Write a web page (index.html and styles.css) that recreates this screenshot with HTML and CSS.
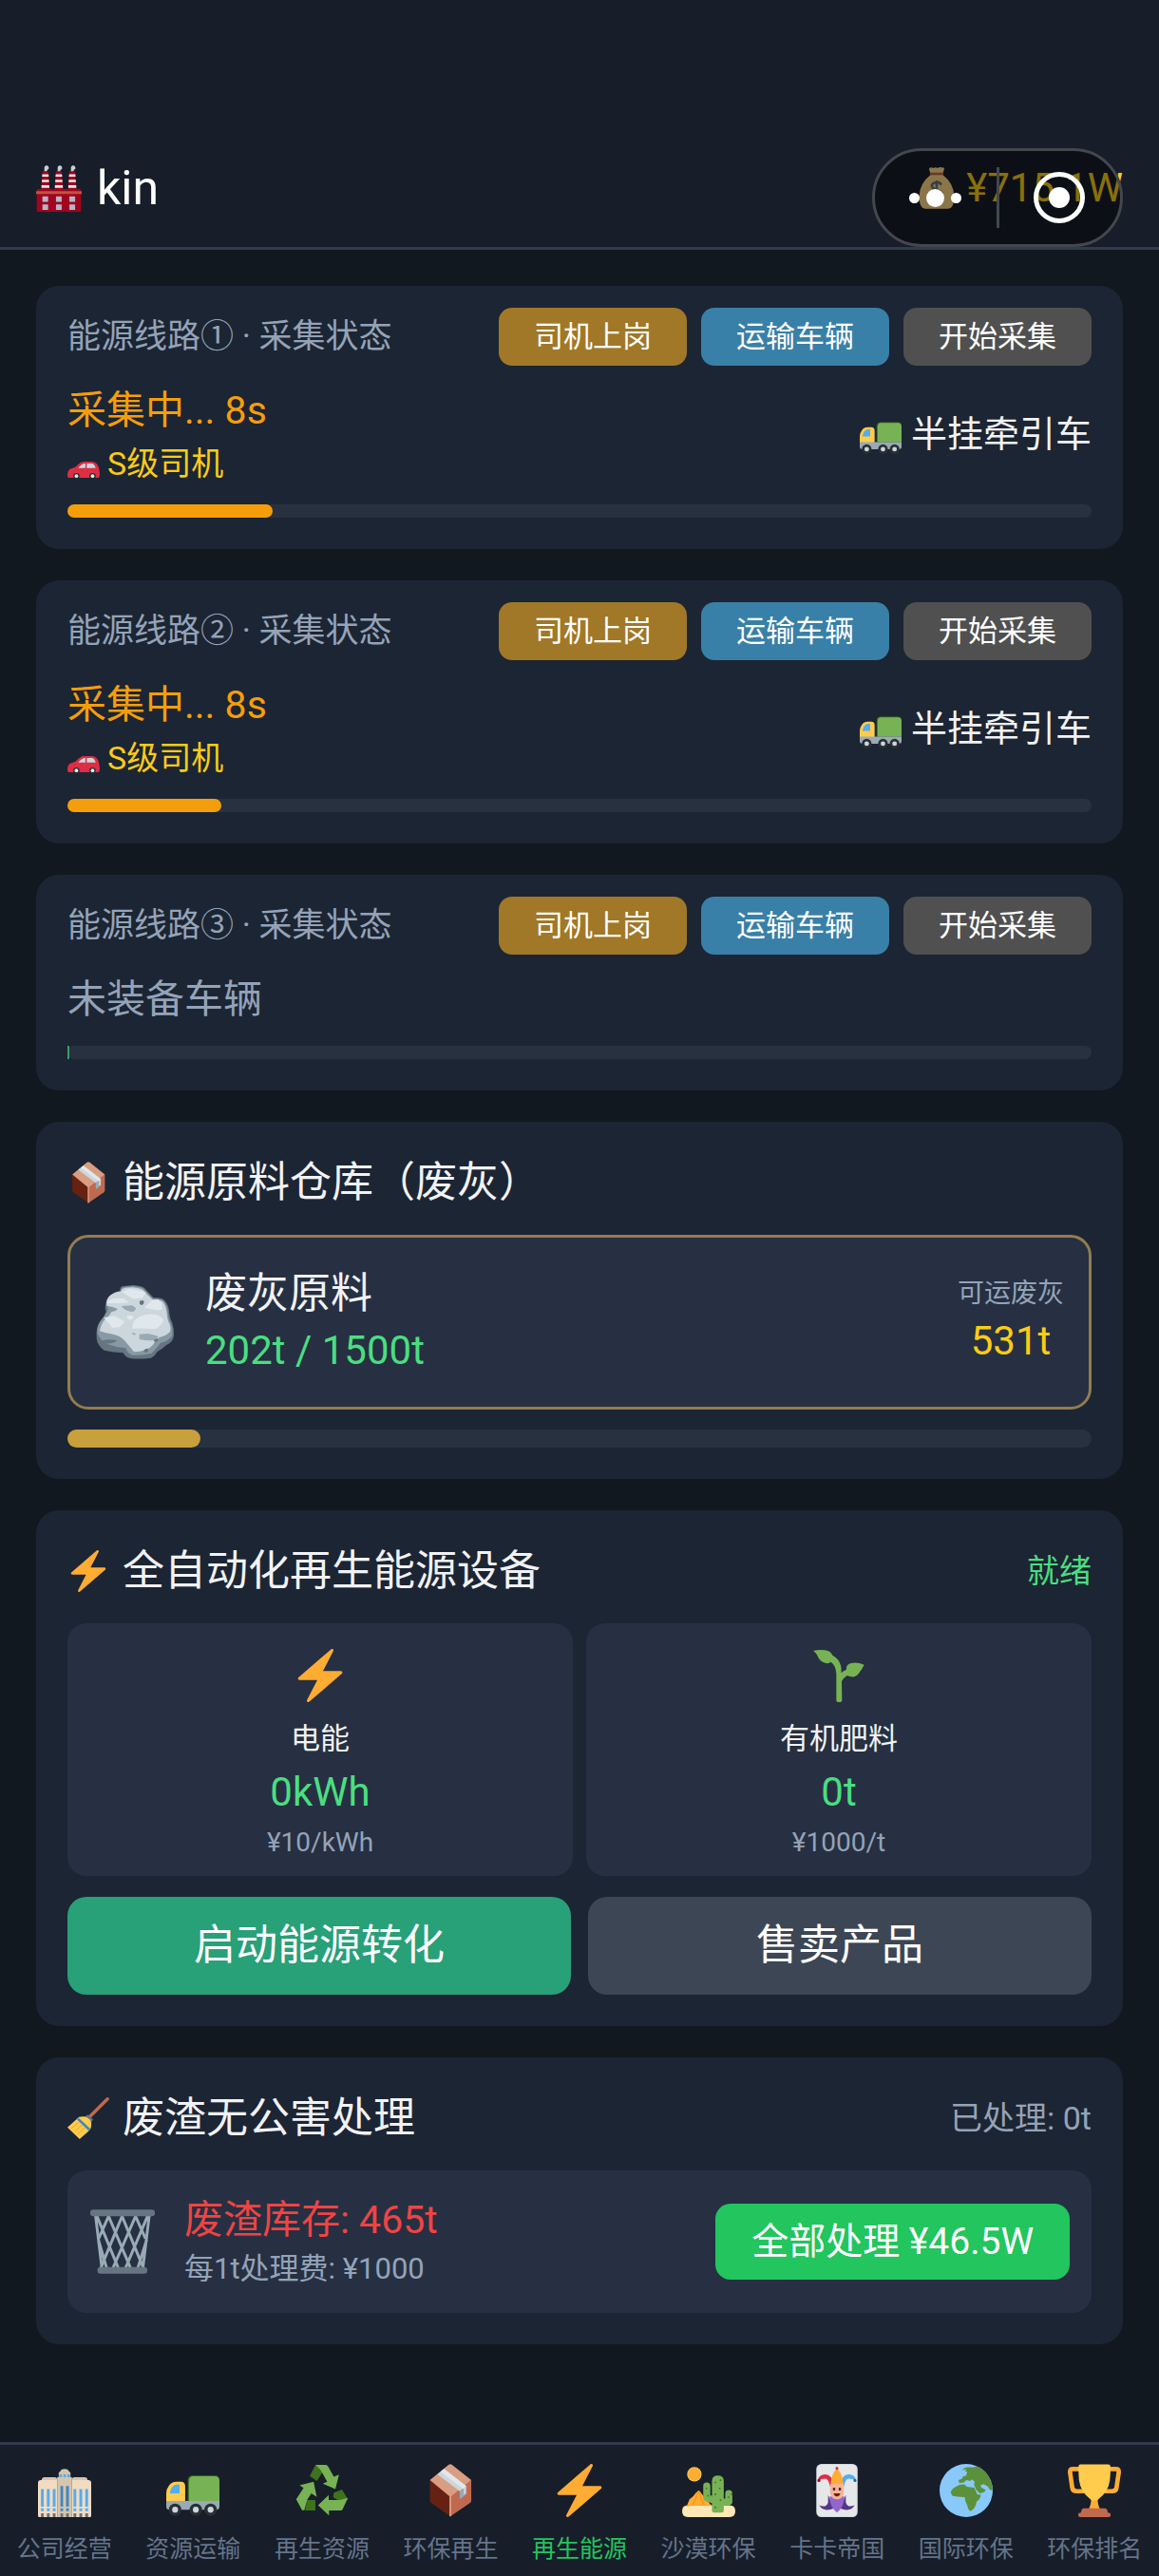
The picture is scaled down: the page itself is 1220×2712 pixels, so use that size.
FILE: index.html
```
<!DOCTYPE html>
<html lang="zh-CN">
<head>
    <meta charset="UTF-8">
    <meta name="viewport" content="width=device-width, initial-scale=1.0">
    <title>再生能源</title>
    <link rel="stylesheet" href="styles.css">
</head>
<body>

    <!-- Shared icons -->
    <svg class="icon-defs" aria-hidden="true">
        <symbol id="icon-factory" viewBox="0 -1.5 36 37.5">
            <path fill="#C8CFD4" d="M6.5 4.500V1.500a1.800 1.800 0 1 1 2.500 1.400L8 4.500zM17 4.500V1.500a1.800 1.800 0 1 1 2.500 1.400L18.500 4.500zM27.500 4.500V1.500a1.800 1.800 0 1 1 2.500 1.400L29 4.500z"/>
            <path fill="#A0041E" d="M5 4h4.500l1.200 14.500H4zM15.600 4h4.500l1.200 14.500h-6.700zM26.200 4h4.500l1.200 14.500h-6.700z"/>
            <path fill="#F3E6EA" d="M4.900 6.300h4.900l.2 2H4.700zM4.600 10.600h5.500l.2 2H4.500zM4.300 15h6.100l.2 2H4.200zM15.500 6.300h4.900l.2 2h-5.300zM15.200 10.600h5.500l.2 2h-5.800zM14.900 15H21l.2 2h-6.400zM26.100 6.300H31l.2 2h-5.300zM25.800 10.600h5.500l.2 2h-5.800zM25.500 15h6.100l.2 2h-6.400z"/>
            <path fill="#A0041E" d="M1.500 18h33a1 1 0 0 1 1 1v16a1 1 0 0 1-1 1h-33a1 1 0 0 1-1-1V19a1 1 0 0 1 1-1z"/>
            <path fill="#C1523F" d="M0 19.700h36V22H0z"/>
            <path fill="#B5B5C8" d="M5 23.800h4.500v4.300H5zM15.700 23.800h4.500v4.300h-4.500zM26.300 23.800h4.500v4.300h-4.500zM5 30.200h4.500v4.300H5zM15.700 30.200h4.500v4.300h-4.500zM26.300 30.200h4.500v4.300h-4.500z"/>
        </symbol>
        <symbol id="icon-money" viewBox="252 104 132 132">
            <path fill="#FDD888" d="M298 107q6-5 12 0 7-4 14 0 6-4 12-2 10 0 9 3l-5 20q36 28 36 68 0 39-20 39h-70q-20 0-20-39 0-40 36-68l-5-17z"/>
            <path fill="#BF6952" d="M300 121h42v8h-42z"/>
            <path fill="none" stroke="#67757F" stroke-width="8" d="M336 160q-6-10-17-8-15 3-13 13 2 7 16 11 16 4 16 14 0 9-15 10-14 0-20-11M321 146v62"/>
        </symbol>
        <symbol id="icon-car" viewBox="0 0 36 36">
            <path fill="#DD2E44" d="M9 22q5-6 10-6h8q6 0 8 7 1 4 1 8l-1 3H2q-2 0-2-3 0-5 3-7z"/>
            <path fill="#CCD6DD" d="M12 23q4-5 8-5v5zM21.500 18H27q3 0 4.500 5h-10z"/>
            <circle cx="10" cy="32" r="3.500" fill="#292F33"/><circle cx="28" cy="32" r="3.500" fill="#292F33"/>
            <circle cx="10" cy="32" r="2" fill="#E1E8ED"/><circle cx="28" cy="32" r="2" fill="#E1E8ED"/>
        </symbol>
        <symbol id="icon-truck" viewBox="0 0 36 36">
            <path fill="#3E721D" d="M18 7.800h15q3 0 3 3V25H14.600V11q0-3.200 3.400-3.200z"/>
            <path fill="#77B255" d="M18.500 8.300h14q3.500 0 3.500 3.500V25H15.400V12q0-3.700 3.100-3.700z"/>
            <path fill="#FFCC4D" d="M7 12h3q2.800 0 2.800 3v11H0v-6q0-3 2-5.500 1.500-2.500 5-2.500z"/>
            <path fill="#55ACEE" d="M6.500 14H9v6H2.500q.5-5 4-6z"/>
            <path fill="#99AAB5" d="M0 25h36v4q0 2-2 2H2q-2 0-2-2z"/>
            <circle cx="6" cy="31" r="4.200" fill="#292F33"/><circle cx="20" cy="31" r="4.200" fill="#292F33"/><circle cx="30" cy="31" r="4.200" fill="#292F33"/>
            <circle cx="6" cy="31" r="2" fill="#CCD6DD"/><circle cx="20" cy="31" r="2" fill="#CCD6DD"/><circle cx="30" cy="31" r="2" fill="#CCD6DD"/>
        </symbol>
        <symbol id="icon-package" viewBox="0 0 36 36">
            <path fill="#662113" d="M4.200 11 18 21.500v14L5 26.300q-.8-.6-.8-1.600z"/>
            <path fill="#C1694F" d="M32.200 11 18 21.500v14l13.400-9.200q.8-.6.800-1.600z"/>
            <path fill="#D99E82" d="m4.200 11 12.600-10.300q1.200-1 2.400 0L32.200 11 18.600 21.800v13.500q-.6.500-1.200 0V21.800z"/>
            <path fill="#99AAB5" d="m24.400 18.500 4.300-3.500v5.500l-4.300 3.500z"/>
            <path fill="#CCD6DD" d="m9.300 7 4.500-3.600L28.700 15v5l-1.600.8V16l-2.700 2.500z"/>
            <path fill="#E1E8ED" d="m11.500 5.300 2.300-1.900L28.700 15l-2 1.800z"/>
        </symbol>
        <symbol id="icon-bolt" viewBox="0 0 36 36">
            <path fill="#FFAC33" d="M32.938 15.651C32.792 15.260 32.418 15 32 15H19.925L26.890 1.458c.219-.426.106-.947-.271-1.243C26.437.071 26.218 0 26 0c-.233 0-.466.082-.653.243L18 6.588 3.347 19.243c-.316.273-.430.714-.284 1.105S3.582 21 4 21h12.075L9.110 34.542c-.219.426-.106.947.271 1.243.182.144.401.215.619.215.233 0 .466-.082.653-.243L18 29.412l14.653-12.655c.317-.273.430-.714.285-1.106z"/>
        </symbol>
        <symbol id="icon-rock" viewBox="122 98 258 252">
            <path fill="#66757F" d="M201 120q2-10 12-10l30-3q24 2 34 8 14 15 30 32 26-2 34 8 14 14 16 40 2 20 8 28 8 22 6 44-4 22-22 28-16 14-30 22-6 12-20 20-34 4-62 2-18-2-26-18-30-2-60-8-22-16-24-38-2-34 8-48 14-16 22-36-8-22 6-40 14-14 38-16z"/>
            <path fill="#8899A6" d="M203 121q4-8 14-9l24-2q24 2 34 8 14 15 30 32 24-2 34 8 12 14 14 40 2 20 8 28 8 22 4 42-14 18-34 20-16 20-30 34-30 8-62 6-16-6-20-22-30-2-60-14-24-14-30-34 0-24 10-38 16-16 24-36-8-22 6-38 14-14 38-15z"/>
            <path fill="#CCD6DD" d="M205 122q6-6 14-7l22-1q22 2 32 8 14 16 30 30 24 0 34 8 10 14 12 38 2 22 8 30 6 14 2 26-12 14-34 18-14 10-20 24-20 22-60 22-16-20-30-36-14-16-36-20-22-2-42-10 4-22 14-34 16-12 24-28 12 2 18-8-16-8-34-10-4-20 10-32 14-12 36-14z"/>
            <path fill="#E1E8ED" d="m207 128 24-10 40 8 12 4-12 18-30 2zM162 158q12-10 30-10l22 2 14 12-28 2-40 0zM278 178l22-22 22-4 10 12 2 20-18 2zM150 210l30-6q24 10 36 18l-16 18-22 2zM240 240q2-28 30-36 20-8 46-4 20 8 22 20-10 20-28 26-36-4-70-2zM222 206q6-6 18-2 8 6-4 12-10 2-14-10z"/>
            <path fill="#99AAB5" d="m205 173 34-2q14 8 12 12l-8 8q-24 0-38-18zM262 262l28-2 32 8-6 12q-24 4-54-2zM238 258q10 0 14 4-10 6-14-4z"/>
            <path fill="#66757F" d="M263 158q8-6 14 0 0 10-8 12-8-2-6-12zM308 280q8-6 15-2-4 10-13 8zM276 314q6-8 14-6 2 8-6 12-8 0-8-6zM146 282q22-6 46 0-18 14-42 8z"/>
        </symbol>
        <symbol id="icon-sprout" viewBox="108 45 168 168">
            <path fill="#77B255" d="M111 51q26-7 49 1 10 6 13 14 20 10 26 35 1 12 1 20 6-8 16-11-2-16 15-20 19-4 41 5-6 12-16 26-10 16-28 11-7-1-10-3-12 8-17 18l1 59q0 7-9 7t-9-6V124q-1-26-17-38-8 7-18 3-18-4-25-24-4-8-13-14z"/>
        </symbol>
        <symbol id="icon-broom" viewBox="0 0 36 36">
            <path stroke="#C1694F" stroke-width="2.800" stroke-linecap="round" d="M34.500 1.500 20 16"/>
            <path fill="#66757F" d="m18 15 4 4q-.5 2.500-4 2.500-3.500-3-3-5z"/>
            <path fill="#FFCC4D" d="M10 17q7-2 10.500 4 .5 5-1.500 7.500L10.500 36 0 26z"/>
            <path stroke="#FFAC33" stroke-width=".9" d="m3 27 7-6M6 29.500l7-6M8.500 32l7-6"/>
            <path stroke="#3B88C3" stroke-width="2.200" d="m9 18.500 10 9.500"/>
        </symbol>
        <symbol id="icon-basket" viewBox="100 410 212 212">
            <path fill="none" stroke="#99AAB5" stroke-width="9" d="m120 434 20 165M291 434l-20 165M124 434l68 165M161 434l70 165M204 434l68 165M247 434l32 72M286 434l-70 165M248 434l-72 165M205 434l-68 165M162 434l-32 72M129 510l26 89M283 510l-28 89"/>
            <rect x="103" y="414" width="206" height="21" rx="10" fill="#66757F"/>
            <rect x="126" y="597" width="159" height="21" rx="10" fill="#66757F"/>
        </symbol>
        <symbol id="icon-company" viewBox="0 0 36 36">
            <path fill="#F1DCC3" d="M0 13q0-2 2-2h11v25H1q-1 0-1-1zM36 13q0-2-2-2H23v25h12q1 0 1-1z"/>
            <path fill="#D6C4AC" d="M2.500 11q0-2 2-2h7q1.500 0 1.500 2zM33.500 11q0-2-2-2h-7q-1.500 0-1.500 2zM13 9h1V6l1.500-1.500q0-1.200 2.500-1.200t2.500 1.200L22 6v3h1v27H13z"/>
            <path fill="#55ACEE" d="M14.500 7h1.700v2h-1.700zM17.200 7h1.700v2h-1.700zM19.900 7h1.700v2h-1.700zM2 17h1.900v12H2zM6 17h1.900v12H6zM10 17h1.900v12H10zM24 17h1.900v12H24zM28 17h1.900v12H28zM32 17h1.900v12H32zM2 30h1.900v2H2zM6 30h1.900v2H6zM10 30h1.900v2H10zM24 30h1.900v2H24zM28 30h1.900v2H28zM32 30h1.900v2H32z"/>
            <path fill="#3B88C3" d="M15.200 15H17v14h-1.800zM19 15h1.900v14H19zM15.200 30H17v2h-1.800zM19 30h1.900v2H19z"/>
            <path fill="#66757F" d="M2 33.500h1.900V36H2zM6 33.500h1.900V36H6zM10 33.500h1.900V36H10zM15.200 33.500H17V36h-1.800zM19 33.500h1.900V36H19zM24 33.500h1.900V36H24zM28 33.500h1.900V36H28zM32 33.500h1.900V36H32z"/>
        </symbol>
        <symbol id="icon-recycle" viewBox="0 0 36 36">
            <path fill="#3E721D" d="m13.500.8-3.800 7.400 4.800 3.300 4.500-7zM8 24.500h5.500v7h-7zM31.500 17.300l4 6.700-4.500 2-5.500-3.500.5-3z"/>
            <path fill="#77B255" d="M13.500.6h7q1 0 1.500 1l4 7 3.500-1.300L27 17l-8.500-3.700L21.500 12 17 4zM12.300 12 2.800 14.500l2.700 1.700L.5 24l4 7.300H6l2-7L10.700 20l3.700 2.300zM15.300 28l7.200-7v3.500H30l5.500-1.500-3.500 7.500q-.4 1-1.500 1h-7.800v3.300z"/>
        </symbol>
        <symbol id="icon-desert" viewBox="0 0 36 36">
            <circle cx="8.300" cy="7" r="4.900" fill="#FFCC4D"/><circle cx="8.300" cy="7" r="4.200" fill="#FFAC33"/>
            <path fill="#FFE8B6" d="M4 28h28q4 0 4 4t-4 4H4q-4 0-4-4t4-4z"/>
            <path fill="#FFAC33" d="M11 18q1 0 2 2l7 8.500Q10 27.500 3 29l2-5q3-2 4-4z"/>
            <path fill="none" stroke="#F4900C" stroke-width=".7" d="m11 19-2 5-2 4M12 19l1 5 2 4"/>
            <path fill="none" stroke="#77B255" stroke-width="4.800" stroke-linecap="round" stroke-linejoin="round" d="M16.700 15v8l5 1.500M31.600 20v5.500l-4.600.5"/>
            <path fill="#77B255" d="M20.200 11.500q0-3.700 4-3.700t4 3.700v20q0 1.500-1.500 1.500h-5q-1.500 0-1.500-1.500z"/>
            <path fill="#3E721D" d="M22 12h1v1h-1zM25.500 10.500h1v1h-1zM25 16h1v1h-1zM22 20h1v1h-1zM25.500 24h1v1h-1zM22 29h1v1h-1zM16 16h1v1h-1zM17 21h1v1h-1zM31 22h1v1h-1zM33 20h1v1h-1z"/>
        </symbol>
        <symbol id="icon-joker" viewBox="0 0 36 36">
            <rect x="4" width="28" height="36" rx="3.500" fill="#CCD6DD"/><rect x="4.500" y=".5" width="27" height="35" rx="3" fill="#E6E7E8"/>
            <path fill="#DD2E44" d="M5 11q1-4 5-4 5 0 6 8h-3q-.5-5-3-5-2.500 0-4.500 1.500z"/>
            <path fill="#55ACEE" d="M31 11q-1-4-5-4-5 0-6 8h3q.5-5 3-5 2.500 0 4.500 1.500z"/>
            <path fill="#FFAC33" d="M18 3q5 5 4 13h-8q-1-8 4-13z"/>
            <circle cx="18" cy="3" r="1" fill="#DD2E44"/><circle cx="5.800" cy="11.200" r="1" fill="#A0041E"/><circle cx="30.200" cy="11.200" r="1" fill="#226699"/>
            <path fill="#553788" d="M12 21l4 9q-7 3-10-2 5 2 6-2zM24 21l-4 9q7 3 10-2-5 2-6-2z"/>
            <path fill="#9266CC" d="M13 22h10q0 7-5 11-5-4-5-11z"/>
            <path fill="#F3B49B" d="M13.300 13.500h9.400V18q0 6-4.700 6t-4.700-6z"/>
            <path fill="#662113" d="M15.300 16h1.500v2h-1.500zM19.200 16h1.500v2h-1.500zM15.800 20h4.400q-.2 2-2.200 2t-2.200-2z"/>
        </symbol>
        <symbol id="icon-globe" viewBox="0 0 36 36">
            <circle cx="18" cy="18" r="18" fill="#88C9F9"/>
            <path fill="#5C913B" d="M15.500 4.500q.5-2 3-2.300h5q1-.7 3-.2 4.500 2.500 7 7 2.500 5 2.300 9-2 0-3-2.500l-3-1.800-2 .8.500 1.500 3 1.500-1 1.500-3 1-2.500-2.500-1.500-3.500.5-2-2-1.500-1 1-2.500-.5-2 1.500-3 .5-.5-2 2.500-1 .5-1.500 2-.5 1-2.500-1.500-.5 1-1.500-2 .5zM11 15.500q3.500-2 6-1.500l1.500 1.500 5 .5 2 4.500 2.500.5q-.5 3-3 4.500-.5 4.500-4 6.500-1.500-.5-2-3l-1.500-4-.5-2.500-5-.3-3.500-.7-1-2.500q1-2.500 3.500-3.500z"/>
        </symbol>
        <symbol id="icon-trophy" viewBox="0 0 36 36">
            <path fill="none" stroke="#FFAC33" stroke-width="3" stroke-linejoin="round" d="M8 3.500H3.500q-2 0-2 2L3 16q.3 2.500 3 2.500h5M28 3.500h4.500q2 0 2 2L33 16q-.3 2.500-3 2.500h-5"/>
            <path fill="#FFAC33" d="M16 22h4q0 5 2 9h-8q2-4 2-9z"/>
            <path fill="#FFCC4D" d="M7.300 1.500Q7.300.3 8.500.3h19q1.300 0 1.300 1.200v5q0 10-5 14.500-3 2.700-3.800 3.700h-4q-.8-1-3.800-3.700-4.900-4.500-4.900-14.500z"/>
            <path fill="#C1694F" d="M11 30h14q2 0 2 3 2 0 2 1.500T27.500 36h-19Q7 36 7 34.500T9 33q0-3 2-3z"/>
        </symbol>
    </svg>

    <header class="topbar">
        <div class="company">
            <svg class="company-icon" aria-hidden="true"><use href="#icon-factory"/></svg>
            <h1 class="company-name">kin</h1>
        </div>
        <div class="money">
            <svg class="money-icon" aria-hidden="true"><use href="#icon-money"/></svg>
            <span>¥715.1W</span>
        </div>

        <!-- Host app capsule, floats over the balance -->
        <div class="capsule">
            <button class="capsule-btn capsule-more" aria-label="更多"><i></i><i></i><i></i></button>
            <button class="capsule-btn" aria-label="关闭"><span class="capsule-ring"></span></button>
        </div>
    </header>

    <main class="content">

        <!-- Collection lines -->
        <section class="card line-card">
            <div class="line-head">
                <h2 class="line-title">能源线路① · 采集状态</h2>
                <div class="line-actions">
                    <button class="small-btn btn-driver">司机上岗</button>
                    <button class="small-btn btn-vehicle">运输车辆</button>
                    <button class="small-btn btn-collect">开始采集</button>
                </div>
            </div>
            <div class="line-info">
                <div>
                    <p class="line-status collecting">采集中... 8s</p>
                    <p class="line-driver"><svg class="driver-icon" aria-hidden="true"><use href="#icon-car"/></svg>S级司机</p>
                </div>
                <p class="line-vehicle"><svg class="vehicle-icon" aria-hidden="true"><use href="#icon-truck"/></svg>半挂牵引车</p>
            </div>
            <div class="progress"><div class="progress-fill" style="width: 20%"></div></div>
        </section>

        <section class="card line-card">
            <div class="line-head">
                <h2 class="line-title">能源线路② · 采集状态</h2>
                <div class="line-actions">
                    <button class="small-btn btn-driver">司机上岗</button>
                    <button class="small-btn btn-vehicle">运输车辆</button>
                    <button class="small-btn btn-collect">开始采集</button>
                </div>
            </div>
            <div class="line-info">
                <div>
                    <p class="line-status collecting">采集中... 8s</p>
                    <p class="line-driver"><svg class="driver-icon" aria-hidden="true"><use href="#icon-car"/></svg>S级司机</p>
                </div>
                <p class="line-vehicle"><svg class="vehicle-icon" aria-hidden="true"><use href="#icon-truck"/></svg>半挂牵引车</p>
            </div>
            <div class="progress"><div class="progress-fill" style="width: 15%"></div></div>
        </section>

        <section class="card line-card">
            <div class="line-head">
                <h2 class="line-title">能源线路③ · 采集状态</h2>
                <div class="line-actions">
                    <button class="small-btn btn-driver">司机上岗</button>
                    <button class="small-btn btn-vehicle">运输车辆</button>
                    <button class="small-btn btn-collect">开始采集</button>
                </div>
            </div>
            <div class="line-info">
                <p class="line-status">未装备车辆</p>
            </div>
            <div class="progress"><div class="progress-fill idle"></div></div>
        </section>

        <!-- Raw material store -->
        <section class="card">
            <div class="card-head">
                <h2 class="card-title"><svg class="title-icon" aria-hidden="true"><use href="#icon-package"/></svg>能源原料仓库（废灰）</h2>
            </div>
            <div class="material">
                <svg class="material-icon" aria-hidden="true"><use href="#icon-rock"/></svg>
                <div class="material-info">
                    <p class="material-name">废灰原料</p>
                    <p class="material-amount">202t / 1500t</p>
                </div>
                <div class="material-ready">
                    <p class="ready-label">可运废灰</p>
                    <p class="ready-value">531t</p>
                </div>
            </div>
            <div class="progress storage"><div class="progress-fill" style="width: 13%"></div></div>
        </section>

        <!-- Energy equipment -->
        <section class="card">
            <div class="card-head">
                <h2 class="card-title"><svg class="title-icon" aria-hidden="true"><use href="#icon-bolt"/></svg>全自动化再生能源设备</h2>
                <span class="state-ready">就绪</span>
            </div>
            <div class="products">
                <div class="product">
                    <svg class="product-icon" aria-hidden="true"><use href="#icon-bolt"/></svg>
                    <p class="product-name">电能</p>
                    <p class="product-amount">0kWh</p>
                    <p class="product-price">¥10/kWh</p>
                </div>
                <div class="product">
                    <svg class="product-icon" aria-hidden="true"><use href="#icon-sprout"/></svg>
                    <p class="product-name">有机肥料</p>
                    <p class="product-amount">0t</p>
                    <p class="product-price">¥1000/t</p>
                </div>
            </div>
            <div class="big-actions">
                <button class="big-btn btn-convert">启动能源转化</button>
                <button class="big-btn btn-sell">售卖产品</button>
            </div>
        </section>

        <!-- Slag treatment -->
        <section class="card">
            <div class="card-head">
                <h2 class="card-title"><svg class="title-icon" aria-hidden="true"><use href="#icon-broom"/></svg>废渣无公害处理</h2>
                <span class="state-done">已处理: 0t</span>
            </div>
            <div class="slag">
                <svg class="slag-icon" aria-hidden="true"><use href="#icon-basket"/></svg>
                <div class="slag-info">
                    <p class="slag-stock">废渣库存: 465t</p>
                    <p class="slag-fee">每1t处理费: ¥1000</p>
                </div>
                <button class="slag-btn">全部处理 ¥46.5W</button>
            </div>
        </section>
    </main>

    <nav class="tabbar">
        <a href="#company" class="tab"><svg class="tab-icon" aria-hidden="true"><use href="#icon-company"/></svg>公司经营</a>
        <a href="#transport" class="tab"><svg class="tab-icon" aria-hidden="true"><use href="#icon-truck"/></svg>资源运输</a>
        <a href="#resource" class="tab"><svg class="tab-icon" aria-hidden="true"><use href="#icon-recycle"/></svg>再生资源</a>
        <a href="#renew" class="tab"><svg class="tab-icon" aria-hidden="true"><use href="#icon-package"/></svg>环保再生</a>
        <a href="#energy" class="tab active" aria-current="page"><svg class="tab-icon" aria-hidden="true"><use href="#icon-bolt"/></svg>再生能源</a>
        <a href="#desert" class="tab"><svg class="tab-icon" aria-hidden="true"><use href="#icon-desert"/></svg>沙漠环保</a>
        <a href="#cards" class="tab"><svg class="tab-icon" aria-hidden="true"><use href="#icon-joker"/></svg>卡卡帝国</a>
        <a href="#world" class="tab"><svg class="tab-icon" aria-hidden="true"><use href="#icon-globe"/></svg>国际环保</a>
        <a href="#ranking" class="tab"><svg class="tab-icon" aria-hidden="true"><use href="#icon-trophy"/></svg>环保排名</a>
    </nav>

</body>
</html>
```
FILE: styles.css
```
* {
    box-sizing: border-box;
    margin: 0;
    padding: 0;
}

body {
    display: flex;
    flex-direction: column;
    min-height: 100vh;
    background-color: #121820;
    color: #f1f2f6;
    font-family: Roboto, 'Noto Sans CJK SC', sans-serif;
}

h1,
h2 {
    font-weight: normal;
}

button {
    border: none;
    color: #fff;
    font-family: inherit;
    cursor: pointer;
}

svg {
    flex-shrink: 0;
}

.icon-defs {
    position: absolute;
    width: 0;
    height: 0;
}

/* Top bar, leaves room for the phone status bar */
.topbar {
    position: relative;
    display: flex;
    justify-content: space-between;
    align-items: center;
    padding: 168px 38px 32px;
    background-color: #171e29;
    border-bottom: 3px solid #313b4d;
}

.company {
    display: flex;
    align-items: center;
    gap: 16px;
}

.company-icon {
    width: 48px;
    height: 50px;
}

.company-name {
    font-size: 50px;
    line-height: 60px;
    color: #fff;
}

.money {
    display: flex;
    align-items: center;
    gap: 10px;
    font-size: 42px;
    line-height: 60px;
    color: #facc15;
}

.money-icon {
    width: 44px;
    height: 44px;
}

/* Capsule */
.capsule {
    position: absolute;
    right: 38px;
    bottom: 0;
    display: flex;
    align-items: center;
    width: 264px;
    height: 104px;
    border: 3px solid #43474e;
    border-radius: 52px;
    background-color: rgba(0, 0, 0, 0.45);
}

.capsule-btn {
    display: flex;
    flex: 1;
    justify-content: center;
    align-items: center;
    height: 64px;
    background: none;
}

.capsule-more {
    gap: 7px;
    border-right: 3px solid #43474e;
}

.capsule-more i {
    width: 11px;
    height: 11px;
    border-radius: 50%;
    background-color: #fff;
}

.capsule-more i:nth-child(2) {
    width: 19px;
    height: 19px;
}

.capsule-ring {
    display: flex;
    justify-content: center;
    align-items: center;
    width: 54px;
    height: 54px;
    border: 5px solid #fff;
    border-radius: 50%;
}

.capsule-ring::after {
    content: '';
    width: 22px;
    height: 22px;
    border-radius: 50%;
    background-color: #fff;
}

/* Cards */
.content {
    display: flex;
    flex: 1;
    flex-direction: column;
    gap: 33px;
    padding: 38px;
}

.card {
    padding: 33px;
    border-radius: 24px;
    background-color: #1c2533;
}

.line-card {
    padding-top: 23px;
}

.line-head,
.line-info,
.card-head {
    display: flex;
    justify-content: space-between;
    align-items: center;
}

.line-head {
    margin-bottom: 18px;
}

.line-title {
    font-size: 35px;
    line-height: 46px;
    color: #94a3b8;
}

.line-actions {
    display: flex;
    gap: 15px;
}

.small-btn {
    padding: 0 37px;
    border-radius: 14px;
    font-size: 31px;
    line-height: 61px;
}

.btn-driver {
    background-color: #a07828;
}

.btn-vehicle {
    background-color: #3880a8;
}

.btn-collect {
    background-color: #505050;
}

.line-status {
    font-size: 41px;
    line-height: 58px;
    color: #94a3b8;
}

.line-status.collecting {
    color: #f59e0b;
}

.line-driver {
    display: flex;
    align-items: center;
    gap: 8px;
    margin-top: 4px;
    font-size: 34px;
    line-height: 46px;
    color: #facc15;
}

.driver-icon {
    width: 34px;
    height: 34px;
}

.line-vehicle {
    display: flex;
    align-items: center;
    gap: 10px;
    font-size: 38px;
    line-height: 58px;
}

.vehicle-icon {
    width: 44px;
    height: 44px;
}

/* Progress bars */
.progress {
    height: 14px;
    margin-top: 20px;
    border-radius: 7px;
    background-color: #28313f;
}

.progress-fill {
    height: 100%;
    border-radius: 7px;
    background-color: #f59e0b;
}

.progress-fill.idle {
    width: 2px;
    border-radius: 0;
    background-color: #3a9a6b;
}

.progress.storage {
    height: 19px;
    margin-top: 21px;
    border-radius: 10px;
}

.storage .progress-fill {
    border-radius: 10px;
    background-color: #c8a03c;
}

/* Card heading */
.card-head {
    margin-bottom: 24px;
}

.card-title {
    display: flex;
    align-items: center;
    gap: 14px;
    font-size: 44px;
    line-height: 62px;
}

.title-icon {
    width: 44px;
    height: 44px;
}

.state-ready,
.state-done {
    font-size: 34px;
    line-height: 46px;
}

.state-ready {
    color: #4ade80;
}

.state-done {
    color: #94a3b8;
}

/* Material box */
.material {
    display: flex;
    align-items: center;
    gap: 30px;
    padding: 29px 26px;
    border: 3px solid #937c50;
    border-radius: 22px;
    background-color: #263042;
}

.material-icon {
    width: 86px;
    height: 84px;
}

.material-info {
    flex: 1;
}

.material-name {
    font-size: 44px;
    line-height: 60px;
}

.material-amount {
    font-size: 42px;
    line-height: 60px;
    color: #4ade80;
}

.material-ready {
    text-align: center;
}

.ready-label {
    font-size: 28px;
    line-height: 40px;
    color: #94a3b8;
}

.ready-value {
    font-size: 42px;
    line-height: 60px;
    color: #facc15;
}

/* Products */
.products {
    display: grid;
    grid-template-columns: 1fr 1fr;
    gap: 14px;
}

.product {
    display: flex;
    flex-direction: column;
    align-items: center;
    padding: 27px 20px 15px;
    border-radius: 20px;
    background-color: #263042;
}

.product-icon {
    width: 56px;
    height: 56px;
    margin-bottom: 16px;
}

.product-name {
    font-size: 31px;
    line-height: 46px;
}

.product-amount {
    font-size: 42px;
    line-height: 66px;
    color: #4ade80;
}

.product-price {
    font-size: 28px;
    line-height: 40px;
    color: #94a3b8;
}

.big-actions {
    display: grid;
    grid-template-columns: 1fr 1fr;
    gap: 18px;
    margin-top: 22px;
}

.big-btn {
    border-radius: 20px;
    font-size: 44px;
    line-height: 103px;
}

.btn-convert {
    background-color: #28a078;
}

.btn-sell {
    background-color: #3c4655;
}

/* Slag */
.slag {
    display: flex;
    align-items: center;
    gap: 30px;
    padding: 23px;
    border-radius: 20px;
    background-color: #263042;
}

.slag-icon {
    width: 70px;
    height: 70px;
}

.slag-info {
    flex: 1;
}

.slag-stock {
    font-size: 41px;
    line-height: 58px;
    color: #ef4444;
}

.slag-fee {
    font-size: 31px;
    line-height: 46px;
    color: #94a3b8;
}

.slag-btn {
    padding: 0 38px;
    border-radius: 16px;
    background-color: #22c55e;
    font-size: 39px;
    line-height: 80px;
}

/* Bottom tabs */
.tabbar {
    display: flex;
    padding: 20px 0 11px;
    border-top: 3px solid #313b4d;
    background-color: #171e29;
}

.tab {
    display: flex;
    flex: 1;
    flex-direction: column;
    align-items: center;
    gap: 17px;
    font-size: 25px;
    line-height: 34px;
    color: #64748b;
    text-decoration: none;
}

.tab.active {
    color: #22c55e;
}

.tab-icon {
    width: 56px;
    height: 56px;
}
```
